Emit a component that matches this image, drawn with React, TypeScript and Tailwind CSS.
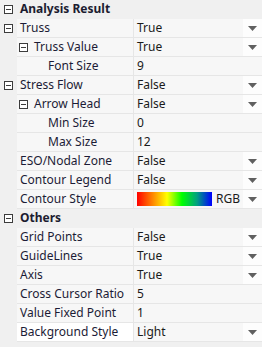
import React from 'react';

type Row = {
  kind: 'cat' | 'prop';
  label: string;
  value?: string;
  level?: 0 | 1 | 2;
  toggle?: boolean;
  dropdown?: boolean;
  gradient?: boolean;
  selected?: boolean;
};

const rows: Row[] = [
  { kind: 'cat', label: 'Analysis Result' },
  { kind: 'prop', label: 'Truss', value: 'True', level: 0, toggle: true, dropdown: true },
  { kind: 'prop', label: 'Truss Value', value: 'True', level: 1, toggle: true, dropdown: true },
  { kind: 'prop', label: 'Font Size', value: '9', level: 2 },
  { kind: 'prop', label: 'Stress Flow', value: 'False', level: 0, toggle: true, dropdown: true },
  { kind: 'prop', label: 'Arrow Head', value: 'False', level: 1, toggle: true, dropdown: true },
  { kind: 'prop', label: 'Min Size', value: '0', level: 2 },
  { kind: 'prop', label: 'Max Size', value: '12', level: 2 },
  { kind: 'prop', label: 'ESO/Nodal Zone', value: 'False', level: 0, dropdown: true },
  { kind: 'prop', label: 'Contour Legend', value: 'False', level: 0, dropdown: true },
  { kind: 'prop', label: 'Contour Style', value: 'RGB', level: 0, dropdown: true, gradient: true },
  { kind: 'cat', label: 'Others' },
  { kind: 'prop', label: 'Grid Points', value: 'False', level: 0, dropdown: true },
  { kind: 'prop', label: 'GuideLines', value: 'True', level: 0, dropdown: true },
  { kind: 'prop', label: 'Axis', value: 'True', level: 0, dropdown: true },
  { kind: 'prop', label: 'Cross Cursor Ratio', value: '5', level: 0 },
  { kind: 'prop', label: 'Value Fixed Point', value: '1', level: 0 },
  { kind: 'prop', label: 'Background Style', value: 'Light', level: 0, dropdown: true, selected: true },
];

function MinusBox() {
  return (
    <span className="relative inline-block h-[9px] w-[9px] shrink-0 border border-[#3c3c3c] bg-white">
      <span className="absolute left-[1px] top-[3px] h-px w-[5px] bg-[#3c3c3c]" />
    </span>
  );
}

function Arrow() {
  return (
    <div className="flex h-full w-[19px] shrink-0 items-center justify-center bg-[#fdfdfd]">
      <svg width="9" height="5" viewBox="0 0 9 5">
        <path d="M0 0H9L4.5 5Z" fill="#606060" />
      </svg>
    </div>
  );
}

export default function App() {
  return (
    <div
      className="h-[347px] w-[262px] overflow-hidden bg-[#f0f0f0] text-[12px] leading-none"
      style={{ fontFamily: '"Noto Sans", "Noto Sans CJK KR", sans-serif' }}
    >
      {rows.map((r) =>
        r.kind === 'cat' ? (
          <div key={r.label} className="flex h-[19px] items-center border-b border-[#f0f0f0] bg-[#f0f0f0]">
            <div className="flex w-[17px] shrink-0 justify-center">
              <MinusBox />
            </div>
            <span className="pl-[3px] font-bold text-[#1c1c30]">{r.label}</span>
          </div>
        ) : (
          <div key={r.label} className="flex h-[19px]">
            <div className="flex w-[17px] shrink-0 items-center justify-center">
              {r.level === 0 && r.toggle && <MinusBox />}
            </div>
            <div
              className={`flex w-[117px] shrink-0 items-center border-r border-b border-[#e6e6e6] ${
                r.selected ? 'bg-white' : 'bg-[#f7f7f7]'
              } ${r.level === 0 ? 'pl-[3px]' : r.level === 1 ? 'pl-[2px]' : 'pl-[31px]'}`}
            >
              {r.level === 1 && r.toggle && (
                <span className="mr-[6px] flex">
                  <MinusBox />
                </span>
              )}
              <span className="whitespace-nowrap text-[#1c1c36]">{r.label}</span>
            </div>
            <div className="flex flex-1 items-center border-b border-[#e6e6e6] bg-[#f7f7f7] pl-[3px]">
              {r.gradient ? (
                <div className="flex flex-1 items-center">
                  <div className="h-[14px] w-[75px] bg-[linear-gradient(to_right,#ff0000,#ff8000_20%,#ffff00_40%,#00ff00_60%,#00a080_80%,#0000ff)]" />
                  <span className="ml-[4px] text-[#1a1a1a]">{r.value}</span>
                </div>
              ) : (
                <span className="flex-1 text-[#1a1a1a]">{r.value}</span>
              )}
              {r.dropdown && <Arrow />}
            </div>
          </div>
        )
      )}
    </div>
  );
}
